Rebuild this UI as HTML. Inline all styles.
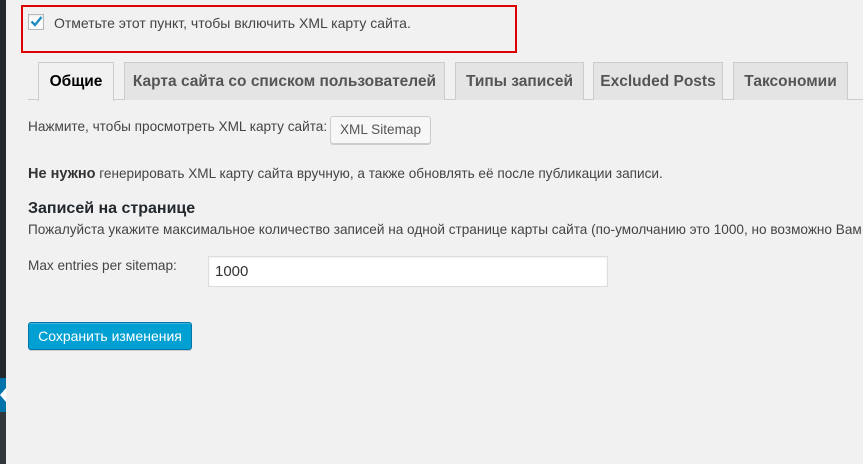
<!DOCTYPE html>
<html><head><meta charset="utf-8"><style>
*{margin:0;padding:0;box-sizing:border-box}
body{width:863px;height:464px;background:#f1f1f1;font-family:"Liberation Sans",sans-serif;color:#444;position:relative;overflow:hidden;font-size:13px}
.a{position:absolute;white-space:nowrap}
.tab{position:absolute;top:62px;height:38px;border:1px solid #ccc;border-bottom:none;background:#e4e4e4;color:#555;font-size:15.5px;font-weight:bold;text-align:center;line-height:37px}
</style></head><body>
<div class="a" style="left:0;top:0;width:6px;height:378px;background:#23282d"></div>
<div class="a" style="left:0;top:378px;width:6px;height:34px;background:#0073aa"></div>
<div class="a" style="left:0;top:388px;width:0;height:0;border-top:7px solid transparent;border-bottom:7px solid transparent;border-right:6px solid #fff"></div>
<div class="a" style="left:0;top:412px;width:6px;height:52px;background:#32373c"></div>

<div class="a" style="left:21px;top:5px;width:496px;height:48px;border:2px solid #d00"></div>
<div class="a" style="left:28px;top:14px;width:16px;height:16px;border:1px solid #b4b9be;background:#fff;box-shadow:inset 0 1px 2px rgba(0,0,0,.1)"></div>
<svg class="a" style="left:29px;top:14px" width="15" height="15" viewBox="0 0 15 15"><path d="M2.5 7.5 L6 11 L12.5 3" stroke="#1e8cbe" stroke-width="2.4" fill="none"/></svg>
<div class="a" style="left:54px;top:15px;font-size:14px;color:#444">Отметьте этот пункт, чтобы включить XML карту сайта.</div>

<div class="a" style="left:28px;top:99px;width:835px;height:1px;background:#ccc"></div>
<div class="tab" style="left:38px;width:76px;background:#f1f1f1;color:#000;height:39px">Общие</div>
<div class="tab" style="left:124px;width:321px">Карта сайта со списком пользователей</div>
<div class="tab" style="left:455px;width:129px">Типы записей</div>
<div class="tab" style="left:593px;width:130px">Excluded Posts</div>
<div class="tab" style="left:733px;width:115px">Таксономии</div>

<div class="a" style="left:28px;top:119px;font-size:13.6px">Нажмите, чтобы просмотреть XML карту сайта:</div>
<div class="a" style="left:330px;top:116px;width:101px;height:28px;border:1px solid #ccc;border-radius:3px;background:#f7f7f7;box-shadow:0 1px 0 #ccc;font-size:13.6px;color:#555;text-align:center;line-height:26px">XML Sitemap</div>

<div class="a" style="left:28px;top:166px;font-size:13.6px"><b style="font-size:14.5px;color:#333">Не нужно</b> генерировать XML карту сайта вручную, а также обновлять её после публикации записи.</div>
<div class="a" style="left:28px;top:200px;font-size:16px;font-weight:bold;color:#23282d">Записей на странице</div>
<div class="a" style="left:28px;top:222px;font-size:13.6px">Пожалуйста укажите максимальное количество записей на одной странице карты сайта (по-умолчанию это 1000, но возможно Вам</div>

<div class="a" style="left:28px;top:258px;font-size:13.6px">Max entries per sitemap:</div>
<div class="a" style="left:208px;top:256px;width:400px;height:31px;border:1px solid #ddd;background:#fff;box-shadow:inset 0 1px 2px rgba(0,0,0,.07);font-size:15px;color:#333;padding-left:6px;line-height:29px">1000</div>

<div class="a" style="left:28px;top:322px;width:164px;height:28px;border:1px solid #0073aa;border-radius:3px;background:#00a0d2;color:#fff;font-size:14px;text-align:center;line-height:26px;box-shadow:inset 0 1px 0 rgba(120,200,230,.5),0 1px 0 rgba(0,0,0,.15)">Сохранить изменения</div>
</body></html>
